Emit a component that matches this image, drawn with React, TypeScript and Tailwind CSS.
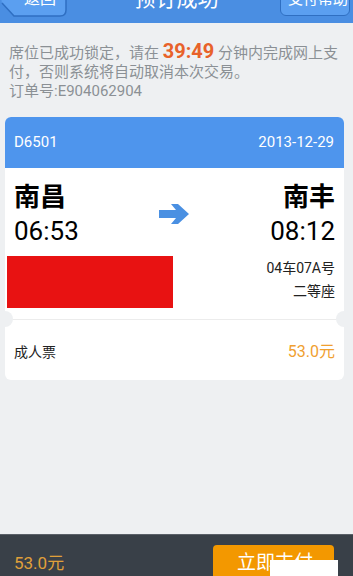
import React from "react";

export default function App() {
  const font = { fontFamily: "Roboto, 'Noto Sans CJK SC', sans-serif" };
  return (
    <div className="relative w-[353px] h-[576px] bg-[#eef0f2] flex flex-col overflow-hidden" style={font}>
      {/* Header */}
      <div className="relative h-[23px] bg-[#4a8ee2] overflow-hidden shrink-0">
        <svg className="absolute left-0 top-0" width="68" height="18" viewBox="0 0 68 18">
          <path d="M-2 -20 L60 -20 Q66 -20 66 -14 L66 10 Q66 16 60 16 L14 16 L2 3" fill="#5b9ff0" stroke="#2f6fc2" strokeWidth="1.5" />
        </svg>
        <div className="absolute left-[24px] top-[-11px] text-[16px] leading-[20px] text-white">返回</div>
        <div className="absolute left-0 right-0 top-[-13px] text-center text-[21px] leading-[24px] text-white">预订成功</div>
        <div className="absolute left-[280px] top-[-16px] w-[70px] h-[32px] rounded-[6px] bg-[#5b9ff0] border-[1.5px] border-[#2f6fc2]" />
        <div className="absolute left-[288px] top-[-11px] text-[15px] leading-[20px] text-white">支付帮助</div>
      </div>

      {/* Info */}
      <div className="px-[9px] pt-[18px] text-[15px] leading-[19px] text-[#8b9095]">
        <div>
          席位已成功锁定，请在 <span className="text-[20px] leading-none font-bold text-[#e8622a]">39:49</span> 分钟内完成网上支
        </div>
        <div>付，否则系统将自动取消本次交易。</div>
        <div>订单号:E904062904</div>
      </div>

      {/* Card */}
      <div className="mx-[5px] mt-[16px] w-[339px] bg-white rounded-[6px]">
        <div className="h-[51px] bg-[#4e95ed] rounded-t-[6px] flex items-center justify-between pl-[9px] pr-[10px] text-white text-[15px]">
          <span>D6501</span>
          <span>2013-12-29</span>
        </div>
        <div className="pt-[14px] px-[9px] flex justify-between items-start">
          <div>
            <div className="text-[26px] leading-[30px] font-bold text-black">南昌</div>
            <div className="text-[26px] leading-[30px] mt-[4px] text-black">06:53</div>
          </div>
          <svg className="mt-[21px]" width="31" height="22" viewBox="0 0 31 22">
            <path d="M0 7 L17 7 L12 1 L19 1 L30 11 L19 21 L12 21 L17 15 L0 15 Z" fill="#4a90e2" />
          </svg>
          <div className="text-right">
            <div className="text-[26px] leading-[30px] font-bold text-black">南丰</div>
            <div className="text-[26px] leading-[30px] mt-[4px] text-black">08:12</div>
          </div>
        </div>
        <div className="mt-[10px] flex justify-between items-start pr-[9px]">
          <div className="ml-[2px] w-[166px] h-[52px] bg-[#e81212]" />
          <div className="text-right text-[14px] leading-[23px] text-[#222] pt-[1px]">
            <div>04车07A号</div>
            <div>二等座</div>
          </div>
        </div>
        <div className="relative mt-[11px] h-[1px] bg-[#ececec]">
          <div className="absolute left-[-8px] top-[-8px] w-[16px] h-[16px] rounded-full bg-[#eef0f2]" />
          <div className="absolute right-[-8px] top-[-8px] w-[16px] h-[16px] rounded-full bg-[#eef0f2]" />
        </div>
        <div className="h-[60px] flex items-center justify-between px-[9px] pt-[4px]">
          <span className="text-[14px] text-[#222]">成人票</span>
          <span className="text-[16px] text-[#f0a030]">53.0元</span>
        </div>
      </div>

      <div className="flex-1" />

      {/* Bottom bar */}
      <div className="h-[42px] bg-[#394048] border-t border-[#5a6068] shrink-0 flex items-start justify-between pl-[14px] pr-[19px]">
        <span className="mt-[17px] text-[17px] leading-[22px] text-[#e0a03a]">53.0元</span>
        <div className="mt-[10px] w-[121px] h-[40px] rounded-[4px] bg-[#f39800] text-white text-[19px] leading-[22px] pl-[24px] pt-[7px]">
          立即支付
        </div>
      </div>
      <div className="absolute left-[270px] top-[560px] w-[68px] h-[16px] bg-white" />
    </div>
  );
}
